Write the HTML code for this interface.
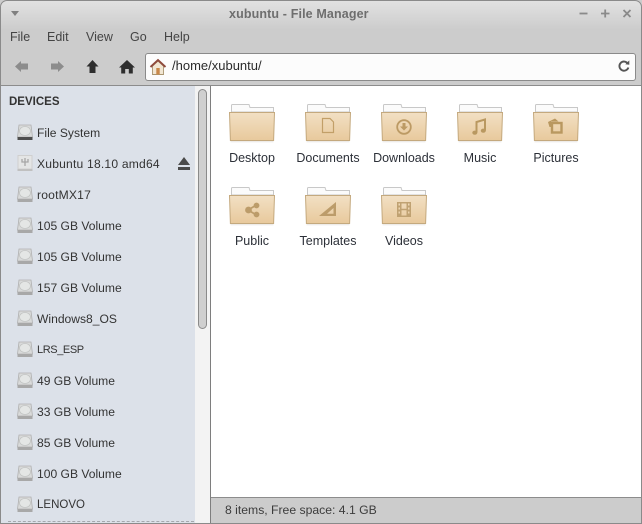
<!DOCTYPE html>
<html><head><meta charset="utf-8">
<style>
html,body{margin:0;padding:0;background:#fff}
#w{position:relative;width:642px;height:524px;overflow:hidden;font-family:"Liberation Sans",sans-serif;font-size:12.5px;color:#3a3a3a;background:#ccc}
#w div{position:absolute;white-space:nowrap}
.m{top:29px;line-height:16px;color:#444}
.s{left:37px;line-height:16px;color:#333;font-size:12.1px}
.l{width:76px;text-align:center;line-height:16px;color:#2c3038}
svg{position:absolute;overflow:visible}
</style></head><body>
<div id="w">
<svg width="0" height="0" style="position:absolute"><defs>
<linearGradient id="f" x1="0" y1="0" x2="0" y2="1"><stop offset="0" stop-color="#f2e0c4"/><stop offset="1" stop-color="#e8c99c"/></linearGradient>
<g id="folder">
<path d="M2.500 9V2.500Q2.500 1.500 3.500 1.500H20L21 4.500H44.500V9Z" fill="#fbfbfb" stroke="#c8c8c8"/>
<path d="M0.500 9.500H45.500L44.600 37.500H1.400Z" fill="url(#f)" stroke="#c4a97e"/>
<path d="M1.500 38.700H44.500" stroke="#e8e6e2"/>
</g>
<g id="hd">
<path d="M2 1H14L15.500 13H.5Z" fill="#d9dada" stroke="#b0b0b0" stroke-width=".8"/>
<ellipse cx="8" cy="7" rx="5.500" ry="4.500" fill="#e4e6e5" stroke="#c2c4c3" stroke-width=".8"/>
<rect x=".5" y="13" width="15" height="3" fill="#a8a8a8"/>
</g>
</defs></svg>

<!-- title bar -->
<div style="left:0;top:0;width:642px;height:30px;background:linear-gradient(#e2e2e2,#cccccc);border-radius:7px 7px 0 0"></div>
<div style="left:229px;top:6px;line-height:16px;font-weight:bold;font-size:12.5px;letter-spacing:.13px;color:#6e6e6e">xubuntu - File Manager</div>
<svg style="left:0;top:0" width="642" height="30">
<path d="M11 11H19L15 16Z" fill="#808080"/>
<path d="M579.500 13.500H587.500" stroke="#8a8a8a" stroke-width="1.800"/>
<path d="M601 13.500H609.500M605.200 9.500V17.500" stroke="#8a8a8a" stroke-width="1.800"/>
<path d="M623.500 10L630.500 17M630.500 10L623.500 17" stroke="#8a8a8a" stroke-width="1.800"/>
</svg>

<!-- menu -->
<div class="m" style="left:10px">File</div>
<div class="m" style="left:47px">Edit</div>
<div class="m" style="left:86px">View</div>
<div class="m" style="left:130px">Go</div>
<div class="m" style="left:164px">Help</div>

<!-- toolbar icons -->
<svg style="left:0;top:50px" width="146" height="35">
<path d="M15 16.500L21 11V13.500H28V19.500H21V22Z" fill="#8c8c8c"/>
<path d="M64 16.500L58 11V13.500H51V19.500H58V22Z" fill="#8c8c8c"/>
<path d="M92.500 10L98.500 16.500H95.500V23H89.500V16.500H86.500Z" fill="#2e2e2e"/>
<path d="M127 10L135 17.500H132.800V23.500H128.800V19H125.200V23.500H121.200V17.500H119Z" fill="#2e2e2e"/>
</svg>

<!-- location -->
<div style="left:145px;top:53px;width:489px;height:26px;background:#fcfcfc;border:1px solid #8a8a8a;border-radius:3px"></div>
<svg style="left:150px;top:58px" width="16" height="18">
<path d="M2.500 8V16.500H13.500V8L8 3Z" fill="#f1e6d3" stroke="#a8946f" stroke-width=".9"/>
<path d="M.5 9L8 2L15.500 9" fill="none" stroke="#8f4a3c" stroke-width="1.900"/>
<rect x="6.300" y="10" width="3.400" height="6.500" fill="#c8874a"/>
</svg>
<div style="left:172px;top:58px;line-height:16px;font-size:13px;color:#2b2b2b">/home/xubuntu/</div>
<svg style="left:616px;top:58px" width="16" height="16">
<path d="M11.800 5.500A4.600 4.600 0 1 0 12.400 9.500" fill="none" stroke="#555" stroke-width="1.900"/>
<path d="M9.300 6.200L13.300 6.700V2.400Z" fill="#555"/>
</svg>

<!-- body frames -->
<div style="left:0;top:85px;width:642px;height:1px;background:#8c8c8c"></div>
<div style="left:1px;top:86px;width:194px;height:437px;background:#dce1e9"></div>
<div style="left:195px;top:86px;width:15px;height:437px;background:#f3f3f3"></div>
<div style="left:210px;top:86px;width:1px;height:438px;background:#7e7e7e"></div>
<div style="left:211px;top:86px;width:430px;height:412px;background:#fff"></div>
<div style="left:211px;top:497px;width:430px;height:1px;background:#8c8c8c"></div>
<div style="left:211px;top:498px;width:430px;height:26px;background:#cccccc"></div>
<div style="left:225px;top:502px;line-height:16px;font-size:12.2px;color:#3c3c3c">8 items, Free space: 4.1 GB</div>

<!-- scrollbar -->
<div style="left:198px;top:89px;width:7px;height:238px;background:#cfcfcf;border:1px solid #8a8a8a;border-radius:5px"></div>

<!-- sidebar -->
<div style="left:9px;top:94px;line-height:16px;font-weight:bold;font-size:11.5px;color:#333">DEVICES</div>
<svg style="left:17px;top:124px" width="16" height="16"><use href="#hd"/><rect x=".5" y="13" width="15" height="3" fill="#4e4e4e"/></svg>
<div class="s" style="top:125px">File System</div>
<svg style="left:17px;top:155px" width="16" height="16">
<path d="M1 .5H15V14H1Z" fill="#e4e5e5" stroke="#cfcfcf"/><rect x=".5" y="14" width="15" height="2" fill="#c0c0c0"/>
<path d="M8 3V11M5 4V7H11V4" fill="none" stroke="#a6a6a6" stroke-width="1.300"/>
</svg>
<div class="s" style="top:156px;letter-spacing:.2px">Xubuntu 18.10 amd64</div>
<svg style="left:178px;top:157px" width="12" height="13"><path d="M6 0L12 8H0Z" fill="#4a4a4a"/><rect x="0" y="10" width="12" height="3" fill="#4a4a4a"/></svg>

<svg style="left:17px;top:186px" width="16" height="16"><use href="#hd"/></svg><div class="s" style="top:187px;letter-spacing:.2px">rootMX17</div>
<svg style="left:17px;top:217px" width="16" height="16"><use href="#hd"/></svg><div class="s" style="top:218px">105 GB Volume</div>
<svg style="left:17px;top:248px" width="16" height="16"><use href="#hd"/></svg><div class="s" style="top:249px">105 GB Volume</div>
<svg style="left:17px;top:279px" width="16" height="16"><use href="#hd"/></svg><div class="s" style="top:280px">157 GB Volume</div>
<svg style="left:17px;top:310px" width="16" height="16"><use href="#hd"/></svg><div class="s" style="top:311px">Windows8_OS</div>
<svg style="left:17px;top:341px" width="16" height="16"><use href="#hd"/></svg><div class="s" style="top:342px;font-size:11px;letter-spacing:-.4px">LRS_ESP</div>
<svg style="left:17px;top:372px" width="16" height="16"><use href="#hd"/></svg><div class="s" style="top:373px">49 GB Volume</div>
<svg style="left:17px;top:403px" width="16" height="16"><use href="#hd"/></svg><div class="s" style="top:404px">33 GB Volume</div>
<svg style="left:17px;top:434px" width="16" height="16"><use href="#hd"/></svg><div class="s" style="top:435px">85 GB Volume</div>
<svg style="left:17px;top:465px" width="16" height="16"><use href="#hd"/></svg><div class="s" style="top:466px">100 GB Volume</div>
<svg style="left:17px;top:496px" width="16" height="16"><use href="#hd"/></svg><div class="s" style="top:497px;font-size:11.5px">LENOVO</div>
<div style="left:8px;top:521px;width:186px;border-top:1px dashed #a5a8ad"></div>

<!-- folders -->
<svg style="left:229px;top:103px" width="46" height="40"><use href="#folder"/></svg>
<svg style="left:305px;top:103px" width="46" height="40"><use href="#folder"/><path d="M17.500 15.500H25L28.500 19V29.500H17.500Z" fill="none" stroke="#c29f68" stroke-width="1.200"/></svg>
<svg style="left:381px;top:103px" width="46" height="40"><use href="#folder"/><circle cx="23" cy="24" r="6.800" fill="none" stroke="#bc9a64" stroke-width="1.800"/><path d="M21.500 20H24.500V23.500H27L23 27.500L19 23.500H21.500Z" fill="#bc9a64"/></svg>
<svg style="left:457px;top:103px" width="46" height="40"><use href="#folder"/><path d="M19.500 29.500V19L28 16.500V27.500" fill="none" stroke="#b99860" stroke-width="2"/><ellipse cx="17.800" cy="29.700" rx="2.500" ry="2.100" fill="#b99860"/><ellipse cx="26.300" cy="27.700" rx="2.500" ry="2.100" fill="#b99860"/></svg>
<svg style="left:533px;top:103px" width="46" height="40"><use href="#folder"/><rect x="19" y="20" width="9.500" height="9.500" fill="none" stroke="#b99860" stroke-width="2.400"/><path d="M15 19L22 15.500L25.500 18.500H18V24H16.500Z" fill="#b99860"/></svg>
<svg style="left:229px;top:186px" width="46" height="40"><use href="#folder"/><path d="M27.500 19L19 24L27.500 29" fill="none" stroke="#bc9c6a" stroke-width="1.800"/><circle cx="19.500" cy="24" r="3.400" fill="#bc9c6a"/><circle cx="27.500" cy="19.500" r="2.900" fill="#bc9c6a"/><circle cx="27.500" cy="28.500" r="2.900" fill="#bc9c6a"/></svg>
<svg style="left:305px;top:186px" width="46" height="40"><use href="#folder"/><path fill-rule="evenodd" d="M31 16V30H14ZM28.500 22L22 27.700H28.500Z" fill="#bc9c6a"/></svg>
<svg style="left:381px;top:186px" width="46" height="40"><use href="#folder"/><path fill-rule="evenodd" d="M16 16H30V31H16ZM17.500 17.500V19.500H19V17.500ZM27 17.500V19.500H28.500V17.500ZM17.500 21.500V23.500H19V21.500ZM27 21.500V23.500H28.500V21.500ZM17.500 25.500V27.500H19V25.500ZM27 25.500V27.500H28.500V25.500ZM20.500 17.500V22.700H25.500V17.500ZM20.500 24.300V29.500H25.500V24.300Z" fill="#c0a272"/></svg>

<div class="l" style="left:214px;top:150px">Desktop</div>
<div class="l" style="left:290px;top:150px">Documents</div>
<div class="l" style="left:366px;top:150px">Downloads</div>
<div class="l" style="left:442px;top:150px">Music</div>
<div class="l" style="left:518px;top:150px">Pictures</div>
<div class="l" style="left:214px;top:233px">Public</div>
<div class="l" style="left:290px;top:233px">Templates</div>
<div class="l" style="left:366px;top:233px">Videos</div>

<!-- window border -->
<div style="left:0;top:0;width:640px;height:522px;border:1px solid #8a8a8a;border-radius:7px 7px 0 0"></div>
</div>
</body></html>
